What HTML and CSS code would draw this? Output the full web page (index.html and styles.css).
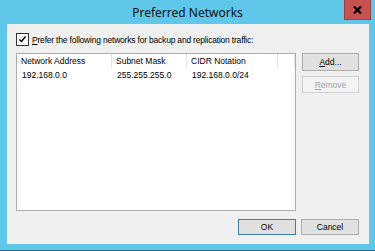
FILE: index.html
```html
<!DOCTYPE html>
<html lang="en">
<head>
    <title>Preferred Networks</title>
    <meta name="viewport" content="width=device-width, initial-scale=1.0">
    <link rel="stylesheet" href="styles.css">
</head>
<body>
    <div class="window">
        <div class="titlebar">
            <span></span>
            <span class="title">Preferred Networks</span>
            <button class="closeBtn">
                <svg width="9" height="8" viewBox="0 0 9 8"><path d="M1 0.5 L8 7.5 M8 0.5 L1 7.5" stroke="#000" stroke-width="2.2"/></svg>
            </button>
        </div>
        <div class="client">
            <label class="checkRow">
                <span class="checkBox">
                    <svg width="11" height="11" viewBox="0 0 11 11"><path d="M2.5 5.5 L4.5 7.5 L8.5 2.5" fill="none" stroke="#000" stroke-width="1.5"/></svg>
                </span>
                <span class="checkText"><u>P</u>refer the following networks for backup and replication traffic:</span>
            </label>
            <div class="mainRow">
                <div class="listBox">
                    <div class="listHead">
                        <span class="col c1">Network Address</span>
                        <span class="col c2">Subnet Mask</span>
                        <span class="col c3">CIDR Notation</span>
                        <span class="col c4"></span>
                    </div>
                    <div class="listRow">
                        <span class="col c1">192.168.0.0</span>
                        <span class="col c2">255.255.255.0</span>
                        <span class="col c3">192.168.0.0/24</span>
                    </div>
                </div>
                <div class="sideBtns">
                    <button class="btn"><u>A</u>dd...</button>
                    <button class="btn disabled"><u>R</u>emove</button>
                </div>
            </div>
            <div class="footer">
                <button class="btn default">OK</button>
                <button class="btn">Cancel</button>
            </div>
        </div>
    </div>
</body>
</html>
```

FILE: styles.css
```css
*{
    margin:0;
    padding:0;
    box-sizing:border-box;
}
body{
    width:375px;
    height:251px;
    font-family:"Liberation Sans", Arial, sans-serif;
    font-size:8.5px;
    color:#000;
}
.window{
    width:375px;
    height:251px;
    background-color:#5fc7ea;
    border-bottom:1px solid #2f6d86;
    display:flex;
    flex-direction:column;
}
/* title bar */
.titlebar{
    height:24px;
    display:grid;
    grid-template-columns:1fr auto 1fr;
    align-items:start;
}
.title{
    font-family:"Noto Sans", "Open Sans", sans-serif;
    font-size:12px;
    line-height:26px;
    color:#111;
}
.closeBtn{
    justify-self:end;
    margin-right:4px;
    width:27px;
    height:20px;
    background-color:#c75050;
    border:1px solid #9b3f3f;
    border-top:none;
    display:flex;
    align-items:center;
    justify-content:center;
}
/* client area */
.client{
    margin:0 6px 0 7px;
    height:220px;
    background-color:#f0f0f0;
    padding:9px 10px 0 9px;
    display:flex;
    flex-direction:column;
}
.checkRow{
    display:flex;
    align-items:center;
    gap:3px;
    height:13px;
    margin-bottom:7px;
}
.checkText{
    letter-spacing:-0.2px;
}
.checkBox{
    width:13px;
    height:13px;
    background:#fff;
    border:1px solid #333;
    display:flex;
    align-items:center;
    justify-content:center;
}
.mainRow{
    display:flex;
    gap:6px;
}
.listBox{
    width:281px;
    height:158px;
    background:#fff;
    border:1px solid #acacac;
}
.listHead{
    display:flex;
    height:14px;
    line-height:15px;
}
.listHead .col{
    border-right:1px solid #e5e5e5;
    padding-left:4px;
}
.listRow{
    display:flex;
    height:14px;
    line-height:14px;
}
.listRow .col{
    padding-left:5px;
}
.c1{ width:95px; }
.c2{ width:75px; }
.c3{ width:91px; }
.c4{ flex:1; }
.sideBtns{
    display:flex;
    flex-direction:column;
    gap:5px;
}
.btn{
    width:57px;
    height:18px;
    font-family:inherit;
    font-size:8.5px;
    color:#000;
    background-color:#e1e1e1;
    border:1px solid #adadad;
}
.btn.disabled{
    height:17px;
    color:#a0a0a0;
    background-color:#f4f4f4;
    border-color:#d0d0d0;
}
.btn.default{
    border-color:#3c7fb1;
}
.footer{
    display:flex;
    justify-content:flex-end;
    gap:5px;
    margin-top:8px;
}
.footer .btn{
    height:16px;
    width:58px;
}
```
